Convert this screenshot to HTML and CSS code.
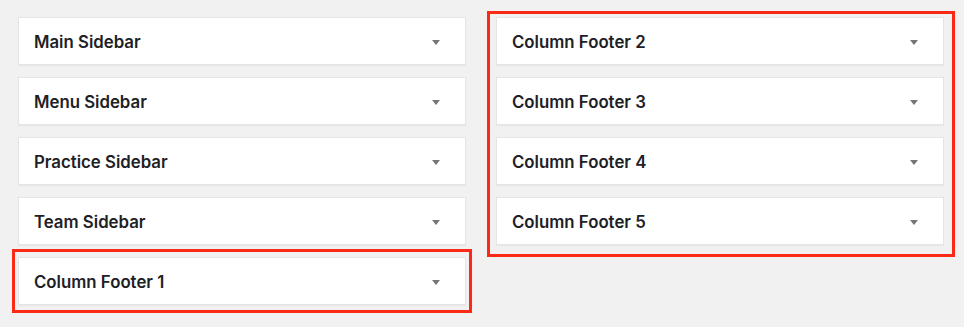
FILE: index.html
```html
<!DOCTYPE html>
<html>
  <head>
    <title>Widget areas</title>
    <link rel="stylesheet" href="styles.css">
  </head>
  <body>
    <main class='areas'>
      <div class='col'>
        <div class='area'><h3>Main Sidebar</h3><svg class='arrow' width='8' height='5' viewBox='0 0 8 5'><polygon points='0,0 8,0 4,5'/></svg></div>
        <div class='area'><h3>Menu Sidebar</h3><svg class='arrow' width='8' height='5' viewBox='0 0 8 5'><polygon points='0,0 8,0 4,5'/></svg></div>
        <div class='area'><h3>Practice Sidebar</h3><svg class='arrow' width='8' height='5' viewBox='0 0 8 5'><polygon points='0,0 8,0 4,5'/></svg></div>
        <div class='area'><h3>Team Sidebar</h3><svg class='arrow' width='8' height='5' viewBox='0 0 8 5'><polygon points='0,0 8,0 4,5'/></svg></div>
        <div class='mark mark-left'>
          <div class='area'><h3>Column Footer 1</h3><svg class='arrow' width='8' height='5' viewBox='0 0 8 5'><polygon points='0,0 8,0 4,5'/></svg></div>
        </div>
      </div>
      <div class='col'>
        <div class='mark mark-right'>
          <div class='area'><h3>Column Footer 2</h3><svg class='arrow' width='8' height='5' viewBox='0 0 8 5'><polygon points='0,0 8,0 4,5'/></svg></div>
          <div class='area'><h3>Column Footer 3</h3><svg class='arrow' width='8' height='5' viewBox='0 0 8 5'><polygon points='0,0 8,0 4,5'/></svg></div>
          <div class='area'><h3>Column Footer 4</h3><svg class='arrow' width='8' height='5' viewBox='0 0 8 5'><polygon points='0,0 8,0 4,5'/></svg></div>
          <div class='area'><h3>Column Footer 5</h3><svg class='arrow' width='8' height='5' viewBox='0 0 8 5'><polygon points='0,0 8,0 4,5'/></svg></div>
        </div>
      </div>
    </main>
  </body>
</html>
```

FILE: styles.css
```css
html, body {
  margin: 0;
  background: #f1f1f1;
  color: #23282d;
  font-family: Inter, 'Liberation Sans', sans-serif;
}

/* page layout */
.areas {
  display: grid;
  grid-template-columns: 448px 448px;
  gap: 30px;
  padding: 17px 18px;
  align-items: start;
}

.col,
.mark {
  display: flex;
  flex-direction: column;
  gap: 12px;
}

/* one widget area */
.area {
  box-sizing: border-box;
  height: 48px;
  display: flex;
  align-items: center;
  justify-content: space-between;
  padding: 0 25px 0 15px;
  background: #fff;
  border: 1px solid #e5e5e5;
  box-shadow: 0 1px 1px rgba(0, 0, 0, .04);
}

.area h3 {
  margin: 0;
  padding-top: 2px;
  font-size: 16.8px;
  font-weight: 600;
  color: #1d2125;
}

.arrow {
  fill: #72777c;
  margin-top: 3px;
}

/* red annotation boxes */
.mark {
  border: 3px solid #fb2a17;
}

.mark-left {
  padding: 5px 3px;
  margin: -8px -6px;
}

.mark-right {
  padding: 3px 8px 9px 6px;
  margin: -6px -11px -12px -9px;
}
```
